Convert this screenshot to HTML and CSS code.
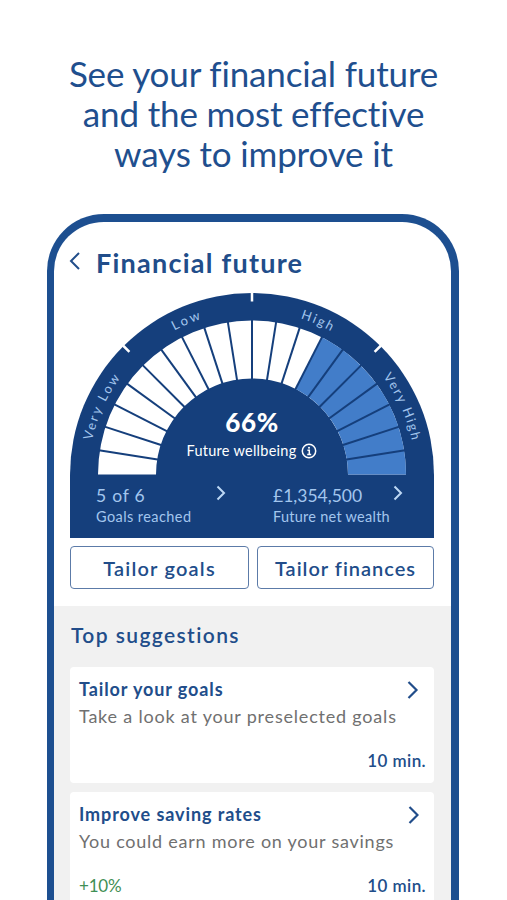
FILE: index.html
```html
<!DOCTYPE html>
<html lang="en">
<head>
<meta charset="utf-8">
<title>Financial future</title>
<link rel="stylesheet" href="styles.css">
</head>
<body>
<h1 class="headline">See your financial future<br>and the most effective<br>ways to improve it</h1>
<main class="phone">
  <header class="topbar">
    <svg class="back" width="12" height="18" viewBox="0 0 12 18"><path d="M10 1 2 9l8 8"/></svg>
    <h2>Financial future</h2>
  </header>

  <section class="gauge">
    <div class="dial">
      <svg class="dial-art" width="364" height="182" viewBox="0 0 364 182">
        <defs>
          <path id="arc" d="M18.500 181.500A163.500 163.500 0 0 1 345.500 181.500"/>
        </defs>
        <path class="ring-empty" d="M28 181.500A154 154 0 0 1 336 181.500H278A96 96 0 0 0 86 181.500Z"/>
        <path class="ring-full" d="M251.900 44.300A154 154 0 0 1 336 181.500H278A96 96 0 0 0 225.600 96Z"/>
        <g id="spokes" class="spokes"></g>
        <path class="ticks" d="M182 0V8.500M53 52.500l6.400 6.400M311 52.500l-6.400 6.400"/>
        <g class="arc-text">
          <text letter-spacing="2.3"><textPath href="#arc" startOffset="13.6%" text-anchor="middle">Very Low</textPath></text>
          <text letter-spacing="2.6"><textPath href="#arc" startOffset="37.3%" text-anchor="middle">Low</textPath></text>
          <text letter-spacing="2"><textPath href="#arc" startOffset="63%" text-anchor="middle">High</textPath></text>
          <text letter-spacing="1.8"><textPath href="#arc" startOffset="86.600%" text-anchor="middle">Very High</textPath></text>
        </g>
      </svg>
      <div class="score">
        <strong>66%</strong>
        <span class="score-label">Future wellbeing
          <svg width="16" height="16" viewBox="0 0 16 16"><circle cx="8" cy="8" r="6.700"/><path d="M6.400 7.200H8.300V11.400M6.200 11.400H10.200"/><circle class="dot" cx="8" cy="4.700" r="1"/></svg>
        </span>
      </div>
    </div>
    <div class="stats">
      <div class="stat">
        <div><p class="value">5 of 6</p><p class="name goals">Goals reached</p></div>
        <svg width="10" height="16" viewBox="0 0 10 16"><path d="M1.500 1.500 8 8l-6.500 6.500"/></svg>
      </div>
      <div class="stat">
        <div><p class="value amount">£1,354,500</p><p class="name">Future net wealth</p></div>
        <svg width="10" height="16" viewBox="0 0 10 16"><path d="M1.500 1.500 8 8l-6.500 6.500"/></svg>
      </div>
    </div>
  </section>

  <div class="actions">
    <button class="goals-btn">Tailor goals</button>
    <button>Tailor finances</button>
  </div>

  <section class="suggestions">
    <h3>Top suggestions</h3>
    <article class="card">
      <div class="card-head"><h4>Tailor your goals</h4><svg width="12" height="20" viewBox="0 0 12 20"><path d="M1.500 2 9.500 10l-8 8"/></svg></div>
      <p class="desc preselected">Take a look at your preselected goals</p>
      <div class="card-foot"><span class="gain"></span><span class="time">10 min.</span></div>
    </article>
    <article class="card">
      <div class="card-head"><h4>Improve saving rates</h4><svg width="12" height="20" viewBox="0 0 12 20"><path d="M2.500 2 10.500 10l-8 8"/></svg></div>
      <p class="desc">You could earn more on your savings</p>
      <div class="card-foot"><span class="gain">+10%</span><span class="time">10 min.</span></div>
    </article>
  </section>
</main>
<script src="gauge.js"></script>
</body>
</html>
```
FILE: styles.css
```css
* { box-sizing: border-box; margin: 0; padding: 0; }
body {
  width: 507px;
  height: 900px;
  overflow: hidden;
  padding-top: 53px;
  background: #fff;
  color: #214d8a;
  font-family: Lato, "Liberation Sans", sans-serif;
}
svg { display: block; fill: none; flex: none; }

.headline {
  font-size: 35px;
  font-weight: 400;
  line-height: 40px;
  letter-spacing: -0.15px;
  text-align: center;
  color: #1f4f8e;
}

.phone {
  display: flex;
  flex-direction: column;
  width: 412px;
  height: 686px;
  margin: 41px 0 0 47px;
  border: solid #1d4f90;
  border-width: 8px 8px 0 7px;
  border-radius: 57px 57px 0 0;
}

.topbar {
  display: flex;
  align-items: center;
  gap: 15px;
  height: 42px;
  margin: 20px 0 9px;
  padding-left: 15px;
}
.topbar h2 { font-size: 27px; line-height: 42px; letter-spacing: 1.24px; }
.back { margin-top: -4px; stroke: #214d8a; stroke-width: 2; }

.gauge {
  flex: none;
  width: 364px;
  height: 245px;
  margin-left: 16px;
  background: #153f7c;
  border-radius: 182px 182px 0 0;
}
.dial { position: relative; height: 182px; }
.ring-empty { fill: #fff; }
.ring-full { fill: #427dc9; }
.spokes { stroke: #153f7c; stroke-width: 2; }
.ticks { stroke: #fff; stroke-width: 2.5; }
.arc-text { fill: #a3c6ee; font-size: 13px; }

.score {
  position: absolute;
  left: 86px;
  right: 86px;
  bottom: 12px;
  display: flex;
  flex-direction: column;
  align-items: center;
  color: #fff;
}
.score strong { font-size: 26px; font-weight: 900; line-height: 34px; letter-spacing: 0.6px; }
.score-label {
  display: flex;
  align-items: center;
  gap: 5px;
  font-size: 14.5px;
  line-height: 24px;
  letter-spacing: 0.26px;
}
.score-label svg { stroke: #fff; stroke-width: 1.5; }
.score-label .dot { fill: #fff; stroke: none; }

.stats { display: grid; grid-template-columns: 177px 177px; padding: 9px 0 0 26px; }
.stat { display: flex; justify-content: space-between; padding-right: 47px; color: #a3c6ee; }
.stat svg { margin-top: 1px; stroke: #bdd8f5; stroke-width: 2; }
.value { font-size: 17.5px; line-height: 23px; letter-spacing: 0.78px; }
.value.amount { letter-spacing: 0; }
.name { font-size: 14.5px; line-height: 20px; letter-spacing: 0.26px; white-space: nowrap; }
.name.goals { letter-spacing: 0.42px; }

.actions {
  display: grid;
  grid-template-columns: 179px 177px;
  gap: 8px;
  margin: 8px 0 17px 16px;
}
.actions button {
  height: 43px;
  padding-top: 1px;
  border: 1px solid #5c7ba8;
  border-radius: 4px;
  background: #fff;
  color: #214d8a;
  font: 600 20px/40px Lato, "Liberation Sans", sans-serif;
  letter-spacing: 1px;
}
.actions .goals-btn { letter-spacing: 1.2px; }

.suggestions {
  flex: 1;
  min-height: 0;
  overflow: hidden;
  padding: 15px 17px 0 16px;
  background: #f1f1f1;
}
.suggestions h3 {
  margin: 0 0 18px 1px;
  font-size: 21px;
  font-weight: 600;
  line-height: 28px;
  letter-spacing: 1.4px;
}
.card {
  height: 116px;
  margin-bottom: 9px;
  padding: 9px 8px 0 9px;
  border-radius: 4px;
  background: #fff;
}
.card-head { display: flex; justify-content: space-between; height: 26px; padding-right: 7px; }
.card-head h4 { font-size: 18px; line-height: 26px; letter-spacing: 0.9px; }
.card-head svg { margin-top: 4px; stroke: #214d8a; stroke-width: 2.2; }
.desc { font-size: 18px; line-height: 28px; letter-spacing: 0.76px; color: #707070; }
.desc.preselected { letter-spacing: 0.8px; }
.card-foot { display: flex; justify-content: space-between; margin-top: 18px; font-size: 17px; line-height: 26px; }
.gain { color: #3f8f55; letter-spacing: -0.2px; }
.time { font-weight: 600; letter-spacing: 0.4px; }
```
FILE: gauge.js
```js
// Dividers between the 20 gauge segments, 9 degrees apart.
const spokes = document.getElementById('spokes');
for (let i = 1; i < 20; i++) {
  const a = (i * 9 * Math.PI) / 180;
  const line = document.createElementNS('http://www.w3.org/2000/svg', 'line');
  line.setAttribute('x1', 182 - 94 * Math.cos(a));
  line.setAttribute('y1', 181.5 - 94 * Math.sin(a));
  line.setAttribute('x2', 182 - 155 * Math.cos(a));
  line.setAttribute('y2', 181.5 - 155 * Math.sin(a));
  spokes.appendChild(line);
}
```
